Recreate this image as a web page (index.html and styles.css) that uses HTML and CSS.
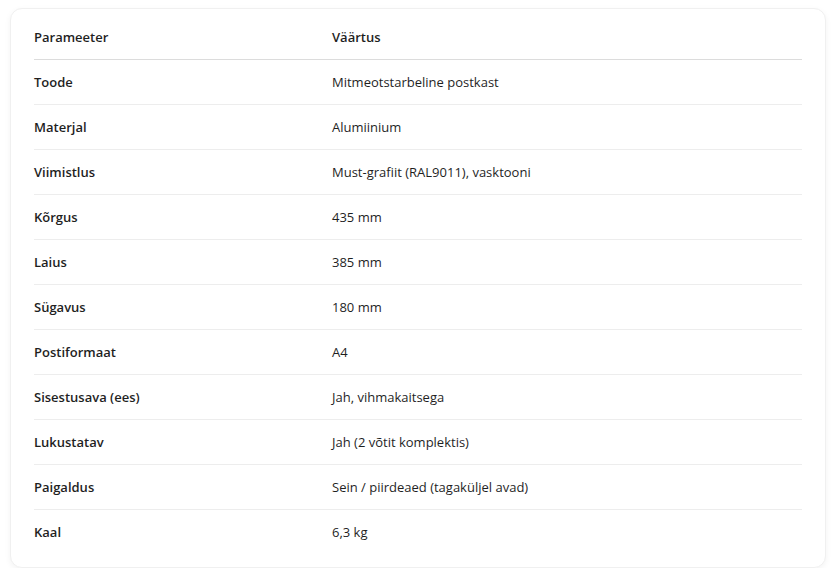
FILE: index.html
```html
<!DOCTYPE html>
<html lang="et">
<head>
<meta charset="utf-8">
<title>Tehnilised andmed</title>
<link rel="stylesheet" href="styles.css">
</head>
<body>
<div class="card">
  <table class="spec">
    <thead>
      <tr><th class="col-param">Parameeter</th><th>Väärtus</th></tr>
    </thead>
    <tbody>
      <tr><td class="name">Toode</td><td>Mitmeotstarbeline postkast</td></tr>
      <tr><td class="name">Materjal</td><td>Alumiinium</td></tr>
      <tr><td class="name">Viimistlus</td><td>Must-grafiit (RAL9011), vasktooni</td></tr>
      <tr><td class="name">Kõrgus</td><td>435 mm</td></tr>
      <tr><td class="name">Laius</td><td>385 mm</td></tr>
      <tr><td class="name">Sügavus</td><td>180 mm</td></tr>
      <tr><td class="name">Postiformaat</td><td>A4</td></tr>
      <tr><td class="name">Sisestusava (ees)</td><td>Jah, vihmakaitsega</td></tr>
      <tr><td class="name">Lukustatav</td><td>Jah (2 võtit komplektis)</td></tr>
      <tr><td class="name">Paigaldus</td><td>Sein / piirdeaed (tagaküljel avad)</td></tr>
      <tr><td class="name">Kaal</td><td>6,3 kg</td></tr>
    </tbody>
  </table>
</div>
</body>
</html>
```
FILE: styles.css
```css
html, body {
  margin: 0;
  background: #ffffff;
}
body {
  padding: 8px 6px 0 10px;
  font-family: "Open Sans", "Noto Sans", sans-serif;
  font-size: 13px;
  color: #1f1f1f;
}
.card {
  background: #ffffff;
  border: 1px solid #f0f0f0;
  border-radius: 12px;
  box-shadow: 0 2px 6px rgba(0, 0, 0, 0.05);
  padding: 6px 23px 13px;
}
.spec {
  width: 100%;
  border-collapse: collapse;
}
.spec th,
.spec td {
  text-align: left;
  padding: 0;
  height: 44px;
  line-height: 20px;
  vertical-align: middle;
}
.spec th {
  font-weight: 600;
  border-bottom: 1px solid #dcdcdc;
}
.spec .col-param {
  width: 298px;
}
.spec td {
  border-bottom: 1px solid #ededed;
}
.spec tbody tr:last-child td {
  border-bottom: none;
}
.spec td.name {
  font-weight: 600;
}
```
